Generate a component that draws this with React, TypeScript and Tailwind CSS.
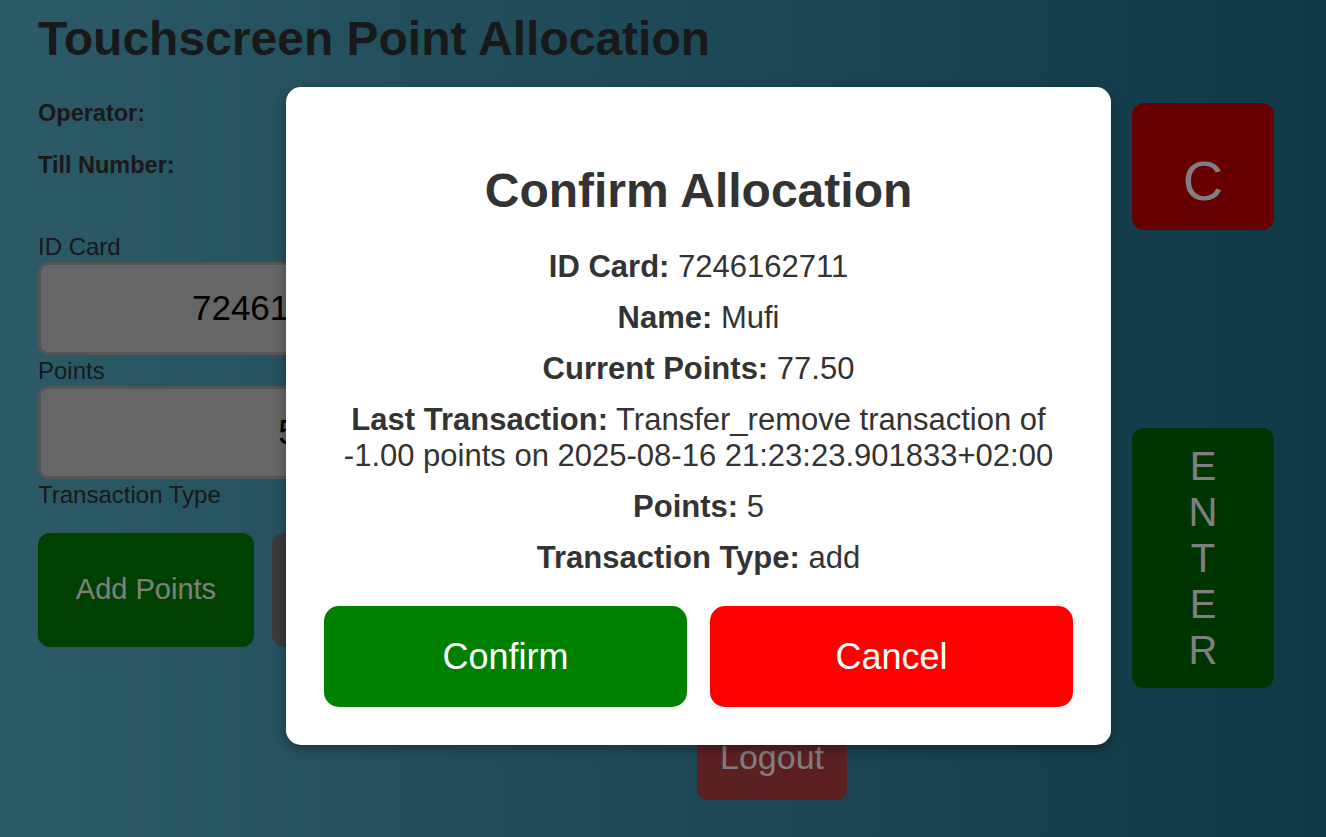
import React from "react";

const font = { fontFamily: '"Liberation Sans", Arial, Helvetica, sans-serif' };

export default function App() {
  return (
    <div
      style={font}
      className="relative h-[837px] w-[1326px] overflow-hidden bg-gradient-to-r from-[#58b4cc] to-[#207290]"
    >
      {/* Page */}
      <div className="flex flex-col px-[38px] pt-[12px]">
        <h1 className="text-[48px] font-bold leading-[53px] text-[#333]">
          Touchscreen Point Allocation
        </h1>

        <div className="flex flex-row">
          {/* Left column */}
          <div className="mt-[35px] flex w-[500px] flex-col text-[#333]">
            <div className="text-[23.5px] font-bold leading-[26px]">Operator:</div>
            <div className="mt-[26px] text-[23.5px] font-bold leading-[26px]">Till Number:</div>

            <label className="mt-[56px] text-[24px] leading-[26px]">ID Card</label>
            <div className="mt-[2px] flex h-[93px] items-center justify-center rounded-[10px] border-[3px] border-[#aaa] bg-[#ccc] text-[35px] text-black">
              7246162711
            </div>
            <label className="mt-[3px] text-[24px] leading-[26px]">Points</label>
            <div className="mt-[2px] flex h-[93px] items-center justify-center rounded-[10px] border-[3px] border-[#aaa] bg-[#ccc] text-[35px] text-black">
              5
            </div>
            <label className="mt-[3px] text-[24px] leading-[26px]">Transaction Type</label>
            <div className="mt-[25px] flex flex-row gap-[18px]">
              <button className="flex h-[114px] w-[216px] items-center justify-center rounded-[12px] bg-[#008000] text-[29px] text-white">
                Add Points
              </button>
              <button className="flex h-[114px] w-[216px] items-center justify-center rounded-[12px] bg-[#747474] text-[29px] text-white">
                Remove
              </button>
            </div>
          </div>

          {/* Right column */}
          <div className="ml-auto mr-[14px] mt-[38px] flex w-[142px] flex-col">
            <button className="flex h-[127px] items-center justify-center rounded-[12px] bg-[#cc0000] pt-[28px] text-[56px] text-white">
              C
            </button>
            <button className="mt-[198px] flex h-[260px] flex-col items-center justify-center rounded-[12px] bg-[#006800] text-[40px] leading-[46px] text-white">
              <span>E</span>
              <span>N</span>
              <span>T</span>
              <span>E</span>
              <span>R</span>
            </button>
          </div>
        </div>

        <div className="mt-[32px] pl-[659px]">
          <button className="flex h-[80px] w-[150px] items-center justify-center rounded-[10px] bg-[#b84040] pb-[6px] text-[34px] text-white">
            Logout
          </button>
        </div>
      </div>

      {/* Overlay */}
      <div className="absolute inset-0 flex items-start justify-center bg-black/50 pl-[71px] pt-[87px]">
        <div className="w-[825px] rounded-[15px] bg-white p-[38px] text-center text-[#333] shadow-[0_4px_12px_rgba(0,0,0,0.35)]">
          <h2 className="mt-[38px] text-[48px] font-bold leading-[55px]">Confirm Allocation</h2>
          <div className="mt-[31px] flex flex-col gap-[15px] text-[31px] leading-[36px]">
            <p>
              <b>ID Card:</b> 7246162711
            </p>
            <p>
              <b>Name:</b> Mufi
            </p>
            <p>
              <b>Current Points:</b> 77.50
            </p>
            <p>
              <b>Last Transaction:</b> Transfer_remove transaction of -1.00 points on 2025-08-16
              21:23:23.901833+02:00
            </p>
            <p>
              <b>Points:</b> 5
            </p>
            <p>
              <b>Transaction Type:</b> add
            </p>
          </div>
          <div className="mt-[30px] grid grid-cols-2 gap-[23px]">
            <button className="h-[101px] rounded-[15px] bg-[#008000] text-[36px] text-white">
              Confirm
            </button>
            <button className="h-[101px] rounded-[15px] bg-[#ff0000] text-[36px] text-white">
              Cancel
            </button>
          </div>
        </div>
      </div>
    </div>
  );
}
